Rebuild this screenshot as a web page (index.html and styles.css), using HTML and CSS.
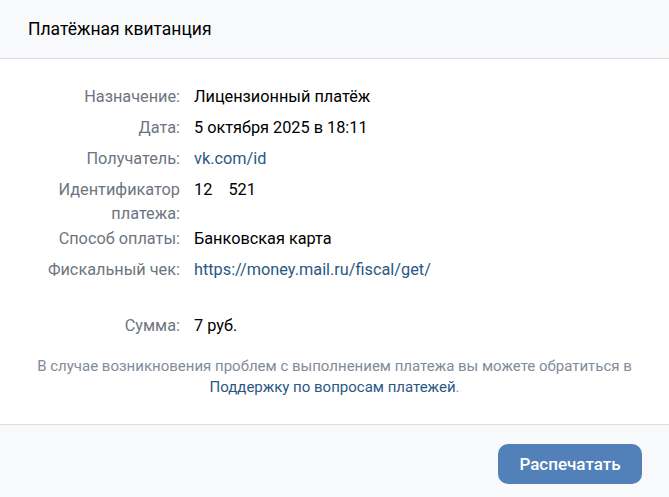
FILE: index.html
```html
<!DOCTYPE html>
<html lang="ru">
<head>
<meta charset="utf-8">
<title>Платёжная квитанция</title>
<link rel="stylesheet" href="styles.css">
</head>
<body>
<div class="box">
  <div class="head">Платёжная квитанция</div>
  <div class="body">
    <div class="rows">
      <div class="row"><div class="label">Назначение:</div><div class="value">Лицензионный платёж</div></div>
      <div class="row"><div class="label">Дата:</div><div class="value">5 октября 2025 в 18:11</div></div>
      <div class="row"><div class="label">Получатель:</div><div class="value link">vk.com/id</div></div>
      <div class="row"><div class="label">Идентификатор платежа:</div><div class="value">12&nbsp;&nbsp;&nbsp;&nbsp;521</div></div>
      <div class="row"><div class="label">Способ оплаты:</div><div class="value">Банковская карта</div></div>
      <div class="row"><div class="label">Фискальный чек:</div><div class="value link">https://money.mail.ru/fiscal/get/</div></div>
      <div class="row sum"><div class="label">Сумма:</div><div class="value">7 руб.</div></div>
    </div>
    <p class="note">В случае возникновения проблем с выполнением платежа вы можете обратиться в <span class="link">Поддержку по вопросам платежей</span>.</p>
  </div>
  <div class="foot"><button class="btn">Распечатать</button></div>
</div>
</body>
</html>
```
FILE: styles.css
```css
html, body { margin: 0; padding: 0; background: #fff; }
body { font-family: Roboto, "Noto Sans", sans-serif; color: #000; }
.box { width: 669px; height: 497px; display: flex; flex-direction: column; }
.head {
  height: 59px; box-sizing: border-box; background: #f8f9fb;
  border-bottom: 1px solid #dadde1;
  padding: 0 28px; display: flex; align-items: center;
  font-size: 17.5px; color: #000;
}
.body { flex: 1; padding-top: 26px; }
.rows { display: flex; flex-direction: column; }
.row {
  display: flex; font-size: 16.3px; line-height: 24px;
  min-height: 31px; padding-bottom: 1px; box-sizing: border-box;
}
.label { width: 180px; text-align: right; color: #6d7580; flex: none; padding-left: 38px; box-sizing: border-box; }
.value { margin-left: 14px; }
.link { color: #2a5885; }
.row.sum { margin-top: 25px; }
.note {
  margin: 11px 0 0; text-align: center; color: #818c99;
  font-size: 15px; line-height: 21px; padding: 0 10px;
}
.foot {
  height: 73px; box-sizing: border-box; background: #f8f9fb;
  border-top: 1px solid #dadde1; display: flex; justify-content: flex-end;
  align-items: flex-start; padding: 19px 27px 0 0;
}
.btn {
  width: 144px; height: 40px; border: 0; border-radius: 10px;
  background: #5181b8; color: #fff; font-family: Roboto, sans-serif;
  font-size: 17px; font-weight: 500; padding: 0; cursor: pointer;
}
```
